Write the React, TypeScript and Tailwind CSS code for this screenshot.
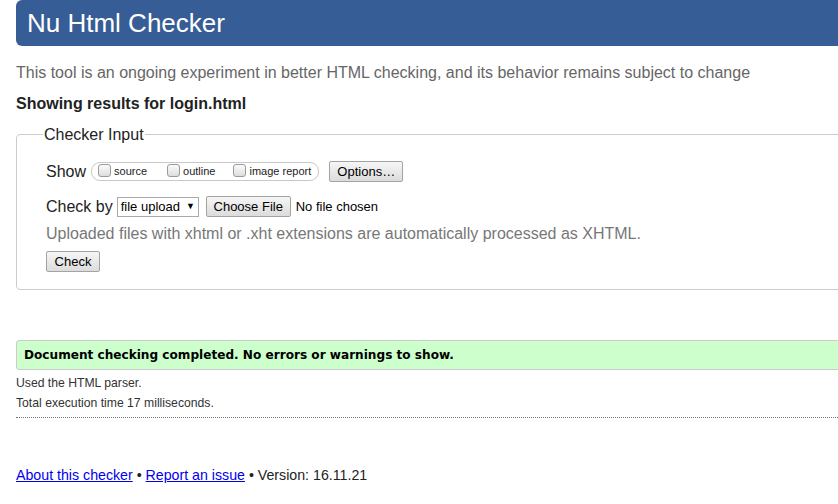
import React from "react";

const arial = { fontFamily: '"Liberation Sans", Arial, sans-serif' };

function Btn({ w, children }: { w: string; children: React.ReactNode }) {
  return (
    <div
      className={`${w} h-[21px] flex items-center justify-center rounded-[2px] border border-[#a3a3a3] bg-gradient-to-b from-[#f6f6f6] to-[#dcdcdc] text-[13px] text-black leading-none`}
    >
      {children}
    </div>
  );
}

function Cb() {
  return (
    <div className="w-[13px] h-[13px] mb-[3px] rounded-[3px] border border-[#9a9a9a] bg-gradient-to-b from-[#fbfbfb] to-[#dedede] shrink-0" />
  );
}

export default function App() {
  return (
    <div
      className="w-[838px] h-[504px] overflow-hidden bg-white text-[#222]"
      style={arial}
    >
      <div className="ml-4 w-[840px] h-[46px] rounded-l-[6px] bg-[#365d95] pl-[11px] flex items-center">
        <span className="text-[26px] text-white leading-none">Nu Html Checker</span>
      </div>

      <p className="mt-[17px] ml-4 h-5 leading-5 text-[16px] text-[#666] whitespace-nowrap">
        This tool is an ongoing experiment in better HTML checking, and its behavior remains subject to change
      </p>
      <p className="mt-[11px] ml-4 h-5 leading-5 text-[16px] font-bold text-[#222]">
        Showing results for login.html
      </p>

      <fieldset className="mt-[10px] ml-4 w-[840px] border border-[#cccccc] rounded-[4px] pl-[29px] pt-[17px] pb-[17px]">
        <legend className="-ml-[3px] px-[1px] text-[16px] leading-5 text-[#222] translate-y-[1px]">Checker Input</legend>

        <div className="flex items-center h-[21px]">
          <span className="text-[16px] text-[#222] mr-[5px]">Show</span>
          <div className="flex items-center h-[19px] rounded-[9px] border border-[#c8c8c8] pl-[6px] pr-[7px] text-[11px] text-[#222]">
            <Cb />
            <span className="ml-[3px] mr-[20px]">source</span>
            <Cb />
            <span className="ml-[3px] mr-[18px]">outline</span>
            <Cb />
            <span className="ml-[3px]">image report</span>
          </div>
          <div className="ml-[10px]">
            <Btn w="w-[74px]">Options…</Btn>
          </div>
        </div>

        <div className="flex items-center h-[21px] mt-[14px]">
          <span className="text-[16px] text-[#222] mr-[4px]">Check by</span>
          <div className="w-[82px] h-[20px] border border-[#a9a9a9] bg-white flex items-center pl-[3px] text-[13px] text-black">
            <span>file upload</span>
            <span className="ml-[6px] text-[9px]">▼</span>
          </div>
          <div className="ml-[7px]">
            <Btn w="w-[85px]">Choose File</Btn>
          </div>
          <span className="ml-[5px] text-[13px] text-black">No file chosen</span>
        </div>

        <p className="mt-[7px] h-5 leading-5 text-[16px] text-[#777]">
          Uploaded files with xhtml or .xht extensions are automatically processed as XHTML.
        </p>

        <div className="mt-[7px]">
          <Btn w="w-[54px]">Check</Btn>
        </div>
      </fieldset>

      <div className="mt-[50px] ml-4 w-[840px] h-[30px] rounded-l-[3px] border border-[#cccccc] bg-[#ccffcc] flex items-center pl-[7px]">
        <span
          className="text-[12.1px] font-bold text-black"
          style={{ fontFamily: '"DejaVu Sans", Verdana, sans-serif' }}
        >
          Document checking completed. No errors or warnings to show.
        </span>
      </div>

      <div className="ml-4 w-[840px] pt-[3px] pb-[4px] border-b border-dotted border-[#777] text-[12.2px] text-[#333]">
        <p className="h-5 leading-5">Used the HTML parser.</p>
        <p className="h-5 leading-5">Total execution time 17 milliseconds.</p>
      </div>

      <p className="mt-[47px] ml-4 h-5 leading-5 text-[14.2px] text-[#222]">
        <a className="text-[#0000ee] underline" href="#">About this checker</a>
        {" • "}
        <a className="text-[#0000ee] underline" href="#">Report an issue</a>
        {" • Version: 16.11.21"}
      </p>
    </div>
  );
}
